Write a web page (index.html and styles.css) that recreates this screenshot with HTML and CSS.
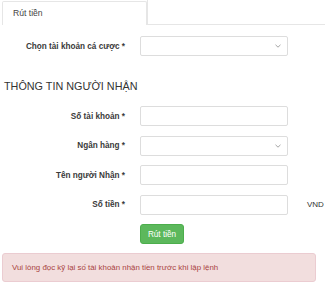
FILE: index.html
```html
<!DOCTYPE html>
<html lang="vi">
<head>
<meta charset="utf-8">
<link rel="stylesheet" href="styles.css">
</head>
<body>
<div class="page">
  <div class="tabs">
    <div class="tab active">Rút tiền</div>
    <div class="tab-rest"></div>
  </div>
  <div class="row first">
    <label class="lbl">Chọn tài khoản cá cược *</label>
    <div class="field select"><span class="caret"><svg width="6" height="4" viewBox="0 0 6 4"><path d="M0.5 0.8 L3 3.2 L5.5 0.8" fill="none" stroke="#9a9a9a" stroke-width="0.9"/></svg></span></div>
  </div>
  <h3 class="heading">THÔNG TIN NGƯỜI NHẬN</h3>
  <div class="row">
    <label class="lbl">Số tài khoản *</label>
    <div class="field"></div>
  </div>
  <div class="row">
    <label class="lbl">Ngân hàng *</label>
    <div class="field select"><span class="caret"><svg width="6" height="4" viewBox="0 0 6 4"><path d="M0.5 0.8 L3 3.2 L5.5 0.8" fill="none" stroke="#9a9a9a" stroke-width="0.9"/></svg></span></div>
  </div>
  <div class="row">
    <label class="lbl">Tên người Nhận *</label>
    <div class="field"></div>
  </div>
  <div class="row">
    <label class="lbl">Số tiền *</label>
    <div class="field"></div>
    <span class="unit">VND</span>
  </div>
  <div class="actions">
    <button class="btn">Rút tiền</button>
  </div>
  <div class="alert">Vui lòng đọc kỹ lại số tài khoản nhận tiền trước khi lập lệnh</div>
</div>
</body>
</html>
```

FILE: styles.css
```css
* { box-sizing: border-box; }
html, body { margin: 0; padding: 0; background: #fff; }
body {
  font-family: "Liberation Sans", Arial, sans-serif;
  color: #333;
  font-size: 8px;
}
.page { width: 325px; height: 286px; overflow: hidden; }
.tabs {
  display: flex;
  height: 25px;
  padding-top: 1px;
}
.tab {
  margin-left: 2px;
  width: 145px;
  border: 1px solid #e6e6e6;
  border-bottom: none;
  padding: 6px 0 0 10px;
  font-size: 8.6px;
  color: #444;
  border-radius: 2px 2px 0 0;
}
.tab-rest {
  flex: 1;
  border-bottom: 1px solid #e6e6e6;
  border-left: 1px solid #e6e6e6;
  margin-top: -1px;
}
.row {
  display: flex;
  align-items: center;
  height: 20px;
  margin-bottom: 9.5px;
}
.row.first { margin-top: 11px; }
.lbl {
  width: 126px;
  text-align: right;
  font-weight: bold;
  font-size: 8.2px;
  color: #3a3a3a;
  padding-right: 1px;
}
.field {
  margin-left: 14px;
  width: 148px;
  height: 20px;
  border: 1px solid #ddd;
  border-radius: 2px;
  background: #fff;
  position: relative;
}
.select .caret {
  position: absolute;
  right: 6px;
  top: 7px;
  display: flex;
}
.unit {
  margin-left: 19px;
  font-size: 8px;
  color: #333;
}
.heading {
  margin: 22.5px 0 13.5px 4px;
  font-weight: normal;
  font-size: 10.8px;
  color: #333;
  height: 14px;
  line-height: 14px;
}
.actions {
  display: flex;
  padding-left: 140px;
}
.btn {
  width: 44px;
  height: 20px;
  background: #5cb85c;
  border: 1px solid #4cae4c;
  border-radius: 3px;
  color: #fff;
  font-family: "Liberation Sans", Arial, sans-serif;
  font-size: 8.2px;
  padding: 0;
}
.alert {
  margin: 9px 9px 0 2px;
  height: 29px;
  background: #f2dede;
  border: 1px solid #ebccd1;
  border-radius: 3px;
  color: #a94442;
  font-size: 7.9px;
  padding: 0 0 0 9px;
  display: flex;
  align-items: center;
}
```
